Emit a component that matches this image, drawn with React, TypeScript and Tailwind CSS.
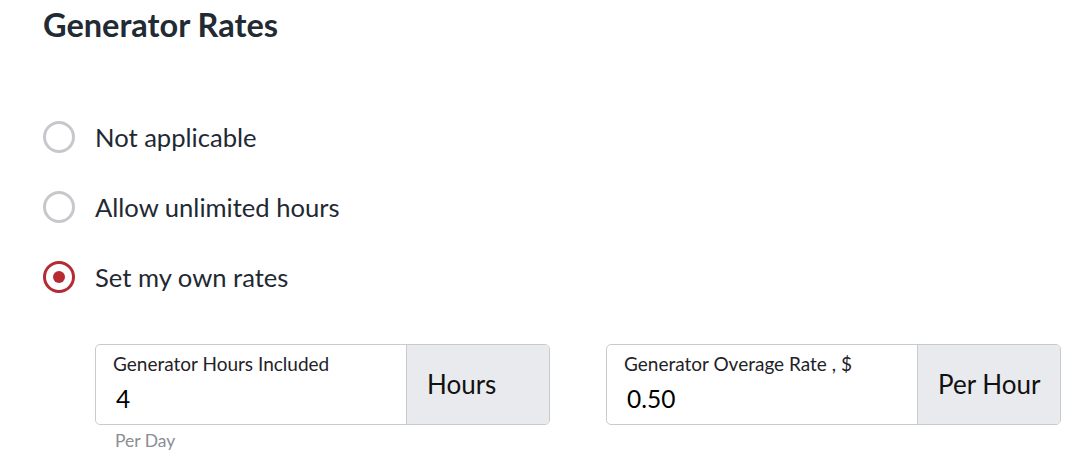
import { useState } from "react";

const options = [
  { value: "none", label: "Not applicable" },
  { value: "unlimited", label: "Allow unlimited hours" },
  { value: "custom", label: "Set my own rates" },
];

function AddonInput({ label, value, addon, hint }: { label: string; value: string; addon: string; hint?: string }) {
  return (
    <div className="w-[455px]">
      <div className="flex h-[81px] rounded-[5px] border border-[#c9cacd] overflow-hidden">
        <div className="flex-1 flex flex-col pl-[17px] pt-[9px]">
          <span className="text-[19px] leading-[20px] text-[#1f2228]">{label}</span>
          <input
            defaultValue={value}
            className="mt-[11px] pl-[3px] text-[24.5px] leading-[28px] h-[28px] text-black outline-none bg-transparent w-full"
          />
        </div>
        <div className="w-[143px] bg-[#e9eaee] border-l border-[#c9cacd] flex items-center pl-[20px] text-[26px] text-[#111] pb-[1px]">
          {addon}
        </div>
      </div>
      {hint && <div className="mt-[6px] pl-[20px] text-[17.5px] leading-[20px] text-[#8b8e94]">{hint}</div>}
    </div>
  );
}

export default function App() {
  const [choice, setChoice] = useState("custom");

  return (
    <div className="w-[1082px] h-[464px] bg-white overflow-hidden pl-[43px] pt-[7px] font-['Lato','Liberation_Sans',sans-serif] text-[#1f2933]">
      <h1 className="text-[32.5px] leading-[36px] font-bold text-[#222a33]">Generator Rates</h1>

      <div className="mt-[78px] flex flex-col gap-[38px]">
        {options.map((opt) => {
          const on = choice === opt.value;
          return (
            <label key={opt.value} className="flex items-center gap-[20px] h-[32px] cursor-pointer" onClick={() => setChoice(opt.value)}>
              <span
                className={`w-[32px] h-[32px] rounded-full border-[3px] flex items-center justify-center ${
                  on ? "border-[#b52a33]" : "border-[#c7c8cb]"
                }`}
              >
                {on && <span className="w-[12px] h-[12px] rounded-full bg-[#b52a33]" />}
              </span>
              <span className="text-[25.6px] leading-[32px]">{opt.label}</span>
            </label>
          );
        })}
      </div>

      {choice === "custom" && (
        <div className="mt-[51px] ml-[52px] flex gap-[56px]">
          <AddonInput label="Generator Hours Included" value="4" addon="Hours" hint="Per Day" />
          <AddonInput label="Generator Overage Rate , $" value="0.50" addon="Per Hour" />
        </div>
      )}
    </div>
  );
}
